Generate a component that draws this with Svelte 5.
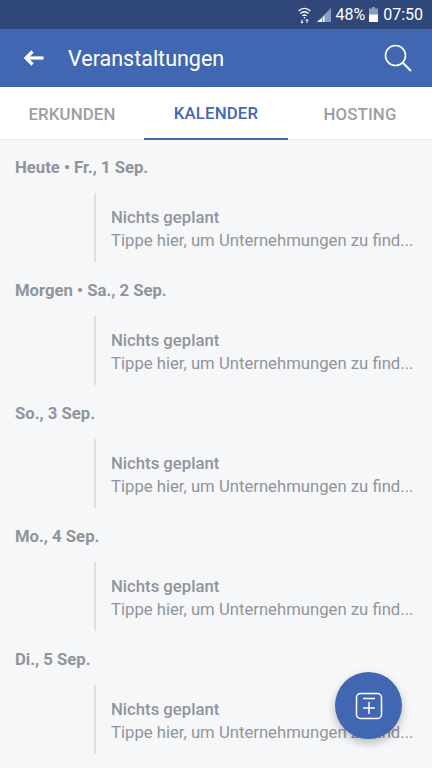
<script lang="ts">
	const days = ['Heute • Fr., 1 Sep.', 'Morgen • Sa., 2 Sep.', 'So., 3 Sep.', 'Mo., 4 Sep.', 'Di., 5 Sep.'];
	const tabs = ['ERKUNDEN', 'KALENDER', 'HOSTING'];
</script>

<div class="screen">
	<div class="status">
		<svg class="wifi" width="13" height="18" viewBox="0 0 13 18" fill="none" stroke="#fff" stroke-width="1.3">
			<path d="M0.7 5 C4 1.5 9 1.5 12.3 5" />
			<path d="M2.5 7.5 C5 5.3 8 5.3 10.5 7.5" />
			<path d="M4.5 9.8 C5.7 8.8 7.3 8.8 8.5 9.8" />
			<path d="M6.5 11 V12.5" />
			<path d="M4 13.5 V17 M2.8 15.8 L4 17.2 L5.2 15.8 M9 17 V13.5 M7.8 14.7 L9 13.3 L10.2 14.7" stroke-width="1" />
		</svg>
		<svg class="signal" width="15" height="16" viewBox="0 0 15 16">
			<path d="M15 1 V15 H1 Z" fill="#8c9cbc" />
			<path d="M1 15 L6 11 V15 Z M7 10.2 L8.5 9 V15 H7 Z" fill="#fff" />
		</svg>
		<span class="pct">48%</span>
		<svg class="battery" width="9" height="16" viewBox="0 0 9 16">
			<path d="M3 0 H6 V1.5 H9 V15 H0 V1.5 H3 Z" fill="#8c9cbc" />
			<rect y="7.5" width="9" height="7.5" fill="#fff" />
		</svg>
		<span class="time">07:50</span>
	</div>

	<header class="bar">
		<svg class="back" width="20" height="16" viewBox="0 0 20 16" fill="none" stroke="#fff">
			<path d="M8.5 1.5 L2 8 L8.5 14.5" stroke-width="3.2" />
			<path d="M3 8 H19.5" stroke-width="3.2" />
		</svg>
		<h1>Veranstaltungen</h1>
		<svg class="search" width="28" height="28" viewBox="0 0 28 28" fill="none" stroke="#fff">
			<circle cx="11.5" cy="11.5" r="10" stroke-width="1.6" />
			<path d="M18.8 18.8 L27 27" stroke-width="2" />
		</svg>
	</header>

	<nav class="tabs">
		{#each tabs as tab, i}
			<div class="tab" class:active={i === 1}>{tab}</div>
		{/each}
	</nav>

	<main class="list">
		{#each days as day}
			<section class="day">
				<h2>{day}</h2>
				<div class="entry">
					<div class="title">Nichts geplant</div>
					<div class="sub">Tippe hier, um Unternehmungen zu find...</div>
				</div>
			</section>
		{/each}
	</main>

	<button class="fab" aria-label="Neu">
		<svg width="28" height="28" viewBox="0 0 28 28" fill="none" stroke="#fff" stroke-width="1.5">
			<rect x="1.5" y="1.5" width="25" height="25" rx="4" />
			<path d="M8 6.5 H20 M8 16 H20 M14 10 V22" />
		</svg>
	</button>
</div>

<style>
	:global(body) {
		margin: 0;
		font-family: Roboto, "Liberation Sans", sans-serif;
	}

	.screen {
		position: relative;
		width: 432px;
		height: 768px;
		overflow: hidden;
		background: #f6f7f9;
		display: flex;
		flex-direction: column;
	}

	.status {
		height: 29px;
		flex: none;
		background: #2f4779;
		color: #fff;
		display: flex;
		align-items: center;
		justify-content: flex-end;
		padding-right: 9px;
		font-size: 16px;
		box-sizing: border-box;
	}

	.wifi { margin-right: 5px; }
	.signal { margin-right: 4px; }
	.pct { margin-right: 4px; }
	.battery { margin-right: 5px; }

	.bar {
		height: 58px;
		flex: none;
		background: #4267b2;
		display: flex;
		align-items: center;
		color: #fff;
		padding: 0 20px 0 24px;
		box-sizing: border-box;
	}

	.bar h1 {
		margin: 0 0 0 24px;
		font-size: 21.5px;
		font-weight: 400;
		flex: 1;
	}

	.tabs {
		height: 53px;
		flex: none;
		background: #fff;
		display: grid;
		grid-template-columns: repeat(3, 1fr);
		border-bottom: 1px solid #e9eaed;
		box-sizing: border-box;
	}

	.tab {
		display: flex;
		align-items: center;
		justify-content: center;
		font-size: 16.8px;
		letter-spacing: 0.15px;
		font-weight: 500;
		color: #9a9ea6;
		padding-top: 1px;
		box-sizing: border-box;
	}

	.tab.active {
		color: #4267b2;
		border-bottom: 2px solid #4267b2;
		margin-bottom: -1px;
	}

	.list {
		padding-top: 17px;
	}

	.day {
		height: 123px;
		box-sizing: border-box;
	}

	.day h2 {
		margin: 0;
		padding-left: 15px;
		font-size: 16.7px;
		line-height: 22px;
		font-weight: 700;
		color: #90949c;
	}

	.entry {
		margin: 14px 0 0 94px;
		height: 69px;
		box-sizing: border-box;
		border-left: 2px solid #dddfe2;
		padding-left: 15px;
		font-size: 16.7px;
		line-height: 23px;
		color: #90949c;
		padding-top: 13px;
		white-space: nowrap;
	}

	.title {
		font-weight: 500;
	}

	.fab {
		position: absolute;
		left: 335px;
		top: 672px;
		width: 67px;
		height: 67px;
		border: none;
		border-radius: 50%;
		padding: 0;
		background: #4267b2;
		box-shadow: 0 4px 8px rgba(0, 0, 0, 0.25);
		display: flex;
		align-items: center;
		justify-content: center;
	}
</style>
